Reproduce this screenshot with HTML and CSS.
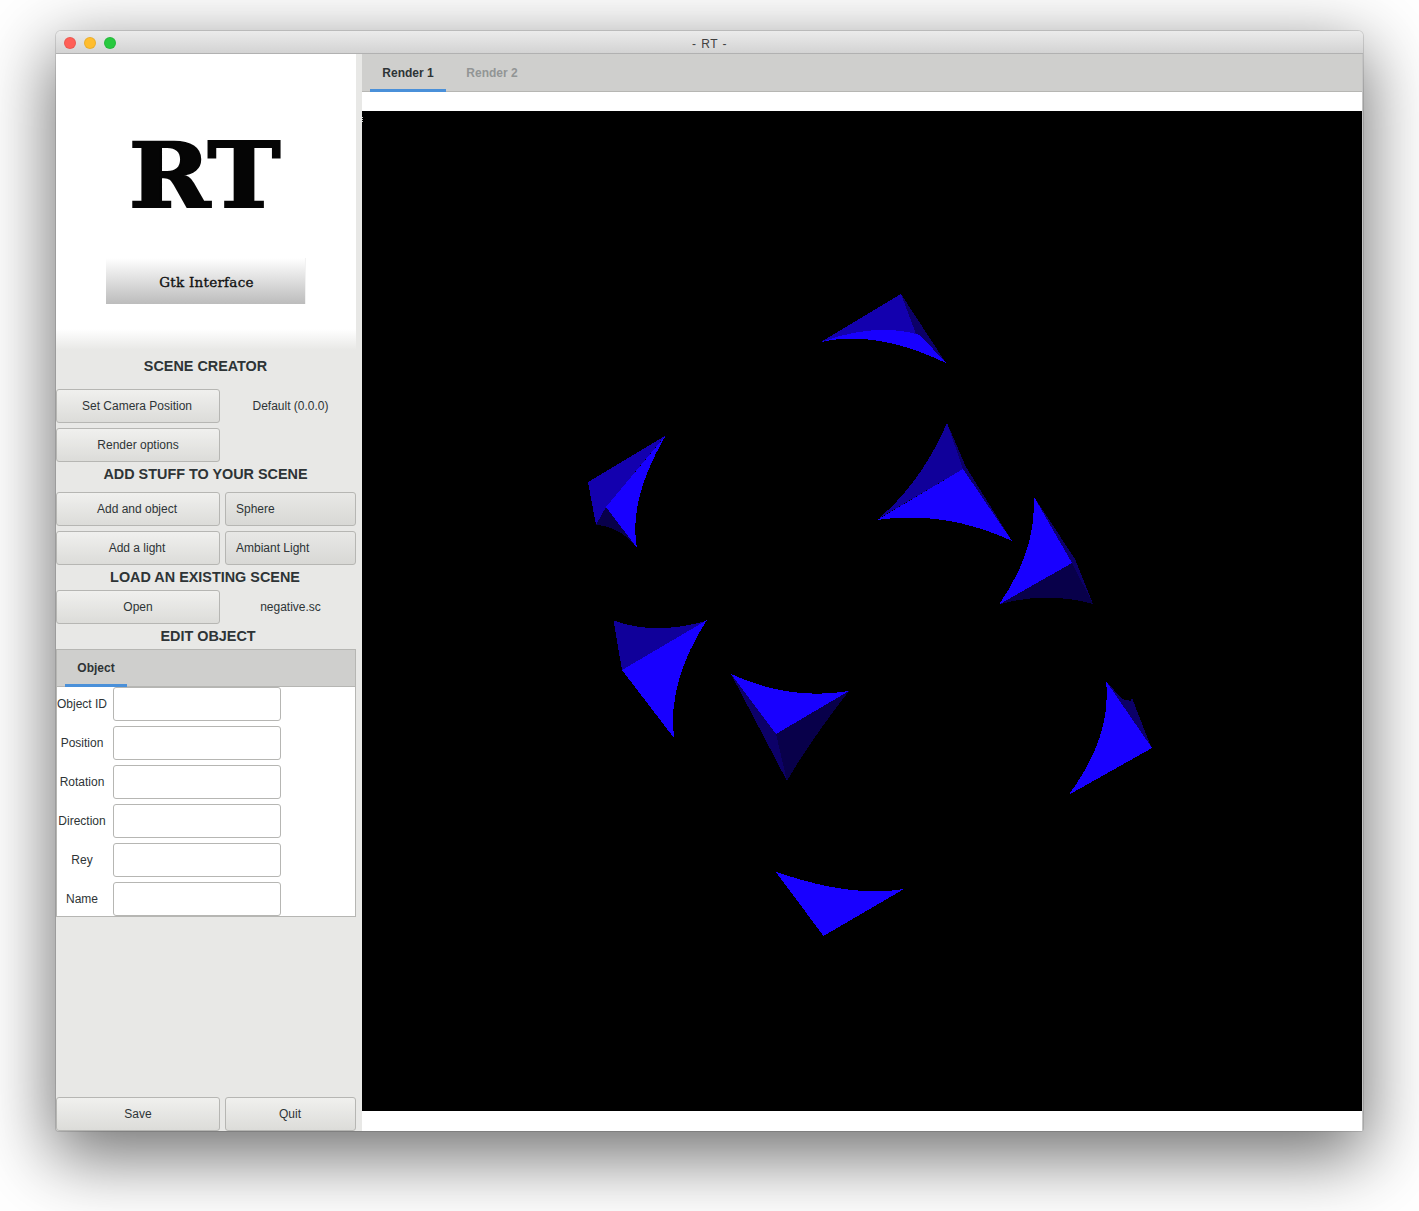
FILE: index.html
```html
<!DOCTYPE html>
<html lang="en">
<head>
<meta charset="utf-8">
<title>- RT -</title>
<link rel="stylesheet" href="styles.css">
</head>
<body>
<div class="window">
  <header class="titlebar">
    <div class="lights">
      <span class="light light-red"></span>
      <span class="light light-yellow"></span>
      <span class="light light-green"></span>
    </div>
    <div class="window-title">- RT -</div>
  </header>
  <div class="content">
    <aside class="sidebar">
      <div class="logo">
        <div class="logo-mark">RT</div>
        <div class="logo-sub">Gtk Interface</div>
      </div>
      <h2 class="heading heading-scene">SCENE CREATOR</h2>
      <div class="btn-grid">
        <button class="btn btn-nudge">Set Camera Position</button>
        <div class="note">Default (0.0.0)</div>
        <button class="btn">Render options</button>
      </div>
      <h2 class="heading heading-add">ADD STUFF TO YOUR SCENE</h2>
      <div class="btn-grid">
        <button class="btn btn-nudge">Add and object</button>
        <button class="btn btn-combo">Sphere</button>
        <button class="btn btn-nudge">Add a light</button>
        <button class="btn btn-combo">Ambiant Light</button>
      </div>
      <h2 class="heading heading-load">LOAD AN EXISTING SCENE</h2>
      <div class="btn-grid">
        <button class="btn">Open</button>
        <div class="note">negative.sc</div>
      </div>
      <h2 class="heading heading-edit">EDIT OBJECT</h2>
      <section class="object-panel">
        <div class="tabs tabs-object">
          <div class="tab tab-active tab-object">Object</div>
        </div>
        <div class="fields">
          <label class="field-label">Object ID</label><div class="input"></div>
          <label class="field-label">Position</label><div class="input"></div>
          <label class="field-label">Rotation</label><div class="input"></div>
          <label class="field-label">Direction</label><div class="input"></div>
          <label class="field-label">Rey</label><div class="input"></div>
          <label class="field-label">Name</label><div class="input"></div>
        </div>
      </section>
      <div class="btn-grid footer-buttons">
        <button class="btn">Save</button>
        <button class="btn btn-nudge-small">Quit</button>
      </div>
    </aside>
    <main class="render-panel">
      <div class="tabs tabs-render">
        <div class="tab tab-active tab-render">Render 1</div>
        <div class="tab tab-muted tab-render">Render 2</div>
      </div>
      <div class="render-body">
        <svg class="scene" viewBox="362 111 1000 1000" shape-rendering="crispEdges" aria-label="Rendered scene">
          <rect class="sky" x="362" y="111" width="1000" height="1000"/>
          <path class="speck" d="M362 117h1v1h-1zM362 119h1v1h-1zM362 121h1v1h-1z"/>

          <path class="mid-bright" d="M821 342L901 294L916 334Q883 326 821 342Z"/>
          <path class="dim" d="M901 294L946 363L920 335L916 334Z"/>
          <path class="lit" d="M821 342Q876 322 920 335L946 363Q876 329.500 821 342Z"/>

          <path class="mid" d="M947 423L963 469L878 519Q921 483 947 423Z"/>
          <path class="dim" d="M947 423L966 467L1012 541L963 469Z"/>
          <path class="lit" d="M877 520L963 469L1012 541Q945 510 877 520Z"/>

          <path class="lit" d="M1033.500 496L1072 563L999 604.500Q1037 550 1033.500 496Z"/>
          <path class="dark" d="M999 604.500L1072 563L1093 604Q1046.500 591 999 604.500Z"/>
          <path class="dim" d="M1033.500 496L1075 559L1093 604L1072 563Z"/>

          <path class="mid-bright" d="M665 436L588 482L596 525L606 507Z"/>
          <path class="lit" d="M666 435Q628 500 637 548L606 507Z"/>
          <path class="dark" d="M596 525L606 507L637 548Q619.500 526 596 525Z"/>

          <path class="mid" d="M613.500 620.500Q654 635.500 706 621L622 670Z"/>
          <path class="lit" d="M707 620Q667 682 674 738L622 670Z"/>

          <path class="lit" d="M731 674Q790 701 849 691L776 734Z"/>
          <path class="dark" d="M849 691L776 734L787 781Q808 744 849 691Z"/>
          <path class="dim" d="M731 674L776 734L787 781Z"/>

          <path class="dim" d="M1106 681L1122 699L1131 701L1132 698L1151.500 748Z"/>
          <path class="lit" d="M1106 681Q1112 736.500 1068.500 795L1152 748Z"/>

          <path class="lit" d="M775.500 871.500Q850 898 904 889L823.500 936Z"/>
        </svg>
      </div>
    </main>
  </div>
</div>
</body>
</html>
```
FILE: styles.css
```css
* { box-sizing: border-box; }
html, body { margin: 0; height: 1211px; background: #fff; overflow: hidden; }
body {
  padding: 31px 0 0 56px;
  font-family: "Liberation Sans", Arial, sans-serif;
  font-size: 12px;
  color: #2e3436;
}
.window {
  width: 1307px;
  height: 1100px;
  display: flex;
  flex-direction: column;
  border-radius: 5px 5px 3px 3px;
  background: #e8e8e6;
  box-shadow: 0 22px 70px 4px rgba(0, 0, 0, .56), 0 0 0 1px rgba(0, 0, 0, .12);
}
.titlebar {
  height: 23px;
  flex: none;
  padding-top: 3px;
  display: flex;
  align-items: center;
  justify-content: center;
  position: relative;
  border-radius: 5px 5px 0 0;
  border-bottom: 1px solid #b1b1b1;
  background: linear-gradient(#ebebeb, #d3d3d3);
}
.lights {
  position: absolute;
  left: 8px;
  top: 6px;
  display: flex;
  gap: 8px;
}
.light {
  width: 12px;
  height: 12px;
  border-radius: 50%;
  border: 1px solid rgba(0, 0, 0, .08);
}
.light-red { background: #ff5f57; }
.light-yellow { background: #ffbd2e; }
.light-green { background: #28c93f; }
.window-title { font-size: 12px; color: #404040; letter-spacing: .5px; word-spacing: 1px; }

.content { flex: 1; min-height: 0; display: flex; }

.sidebar {
  width: 306px;
  flex: none;
  padding-right: 6px;
  display: flex;
  flex-direction: column;
}
.logo {
  height: 296px;
  flex: none;
  padding-top: 75px;
  display: flex;
  flex-direction: column;
  align-items: center;
  background: linear-gradient(#fff 0, #fff 275px, #e8e8e6 100%);
}
.logo-mark {
  font-family: "DejaVu Serif", serif;
  font-weight: 700;
  font-size: 90px;
  line-height: 92px;
  letter-spacing: -1px;
  margin-right: 4px;
  color: #050505;
  -webkit-text-stroke: 2px #050505;
  transform: scaleX(1.09);
}
.logo-sub {
  width: 199px;
  height: 46px;
  margin-top: 37px;
  margin-right: 1px;
  padding: 1px 0 0 2px;
  display: flex;
  align-items: center;
  justify-content: center;
  font-family: "DejaVu Serif", serif;
  font-size: 13.5px;
  letter-spacing: .25px;
  -webkit-text-stroke: .35px #111;
  color: #111;
  background: linear-gradient(rgba(188, 188, 188, 0), #bcbcbc);
  box-shadow: 1px 0 0 #f2f2f2;
}

.heading {
  margin: 0;
  flex: none;
  text-align: center;
  font-size: 14.4px;
  font-weight: 700;
  line-height: 1;
  display: flex;
  align-items: center;
  justify-content: center;
  color: #2e3436;
}
.heading-scene { height: 39px; padding: 0 1px 7px 0; }
.heading-add { height: 30px; padding: 0 1px 6px 0; }
.heading-load { height: 25px; padding-right: 2px; }
.heading-edit { height: 25px; padding-left: 4px; }

.btn-grid {
  display: grid;
  grid-template-columns: 164px 131px;
  grid-auto-rows: 34px;
  gap: 5px;
  flex: none;
}
.btn {
  font: inherit;
  color: #2e3436;
  padding: 0;
  border: 1px solid #b6b6b3;
  border-radius: 3px;
  background: linear-gradient(#f0f0ee, #dcdcd9);
}
.btn-nudge { padding-right: 2px; }
.btn-nudge-small { padding-right: 1px; }
.btn-combo {
  text-align: left;
  padding-left: 10px;
  background: linear-gradient(#e8e8e6, #d8d8d5);
}
.note {
  display: flex;
  align-items: center;
  justify-content: center;
}

.object-panel {
  flex: none;
  width: 300px;
  height: 268px;
  border: 1px solid #b6b6b3;
  background: #fff;
}
.tabs {
  display: flex;
  background: #cfcfcd;
  border-bottom: 1px solid #b6b6b3;
}
.tabs-object { height: 37px; padding-left: 8px; }
.tabs-render { height: 38px; padding-left: 8px; flex: none; }
.tab {
  font-weight: 700;
  display: flex;
  align-items: center;
  justify-content: center;
  padding-top: 2px;
  border-bottom: 3px solid transparent;
  margin-bottom: -1px;
}
.tab-object { width: 62px; }
.tab-render { width: 76px; }
.tab-active { color: #2e3436; border-bottom-color: #4a90d9; }
.tab-muted { color: #929595; margin-left: 8px; }

.fields {
  display: grid;
  grid-template-columns: 50px 168px;
  grid-auto-rows: 34px;
  column-gap: 6px;
  row-gap: 5px;
}
.field-label {
  display: flex;
  align-items: center;
  justify-content: center;
  white-space: nowrap;
}
.input {
  background: #fff;
  border: 1px solid #b6b6b3;
  border-radius: 3px;
}

.footer-buttons { margin-top: auto; }

.render-panel {
  flex: 1;
  min-width: 0;
  display: flex;
  flex-direction: column;
  background: #fff;
  border-right: 1px solid #c4c4c4;
}
.render-body {
  flex: 1;
  padding-top: 19px;
  background: #fff;
}
.scene {
  display: block;
  width: 1000px;
  height: 1000px;
}
.sky { fill: #000; }
.speck { fill: #d8d8d8; }
.lit { fill: #1800ff; }
.mid { fill: #10009a; }
.mid-bright { fill: #1300ae; }
.dim { fill: #0c0068; }
.dark { fill: #08004a; }
```
